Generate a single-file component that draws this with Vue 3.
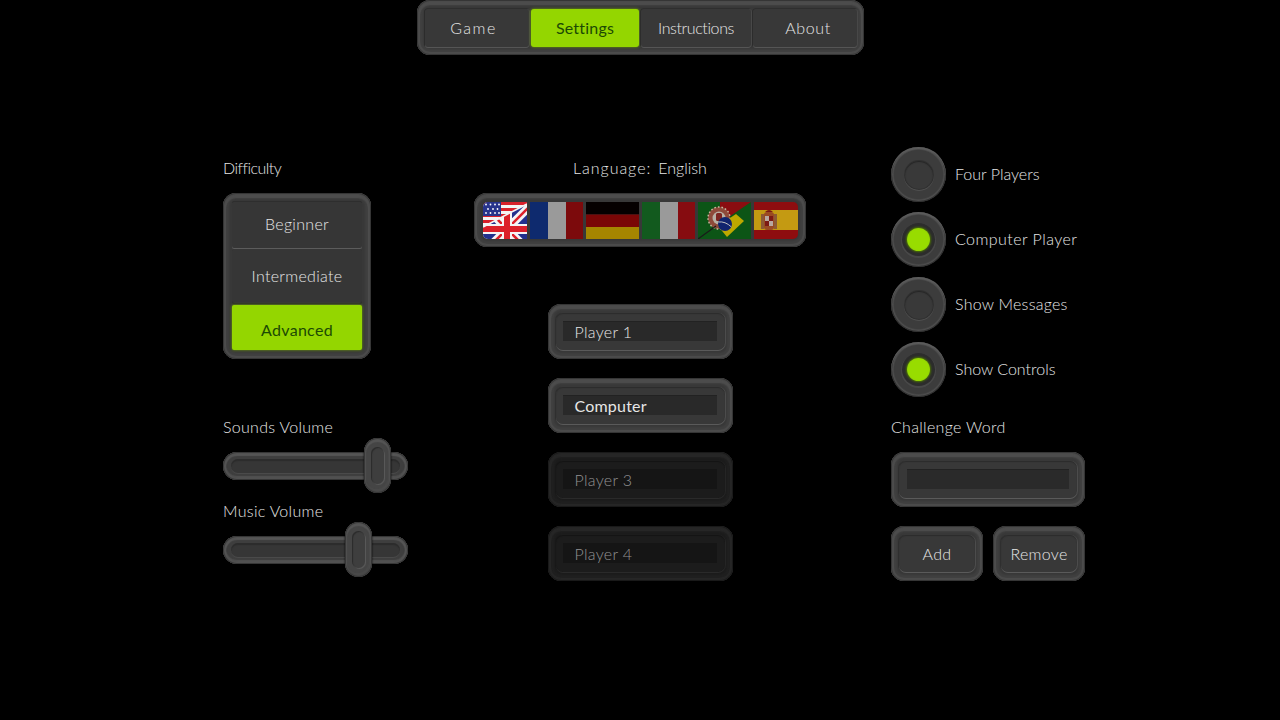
<script setup>
const tabs = [
  { name: 'Game', w: 104, ls: 1.5, cls: 'game' },
  { name: 'Settings', w: 108, ls: 0.2, on: true },
  { name: 'Instructions', w: 110, ls: -0.4 },
  { name: 'About', w: 104, ls: 0.6, cls: 'about' },
]
const levels = [
  { name: 'Beginner', h: 46, cls: 'a' },
  { name: 'Intermediate', h: 54, cls: 'b' },
  { name: 'Advanced', h: 45, cls: 'c', on: true },
]
const players = [
  { name: 'Player 1' },
  { name: 'Computer', big: true },
  { name: 'Player 3', off: true },
  { name: 'Player 4', off: true },
]
const toggles = [
  { name: 'Four Players', ls: 0 },
  { name: 'Computer Player', on: true, ls: 0.45 },
  { name: 'Show Messages', ls: 0.25 },
  { name: 'Show Controls', on: true, ls: 0 },
]
const sliders = [
  { name: 'Sounds Volume', left: 141, cls: 'first' },
  { name: 'Music Volume', left: 122, cls: 'second' },
]
</script>

<template>
  <div class="page">
    <nav class="nav frame">
      <div class="tabs">
        <div
          v-for="t in tabs"
          :key="t.name"
          class="tab"
          :class="[t.cls, { on: t.on }]"
          :style="{ width: t.w + 'px', letterSpacing: t.ls + 'px' }"
        >{{ t.name }}</div>
      </div>
    </nav>

    <main class="main">
      <section class="col left">
        <div class="label difficulty">Difficulty</div>
        <div class="levels frame">
          <div
            v-for="l in levels"
            :key="l.name"
            class="level"
            :class="[l.cls, { on: l.on }]"
            :style="{ height: l.h + 'px' }"
          >{{ l.name }}</div>
        </div>
        <div v-for="s in sliders" :key="s.name" class="slider-block" :class="s.cls">
          <div class="label">{{ s.name }}</div>
          <div class="slider">
            <div class="track"><div class="groove"></div></div>
            <div class="thumb" :style="{ left: s.left + 'px' }"><div class="thumb-in"></div></div>
          </div>
        </div>
      </section>

      <section class="col center">
        <div class="label lang"><span class="lang-key">Language:</span><span class="lang-val">English</span></div>
        <div class="flags frame">
          <div class="strip">
            <svg class="flag" width="44" height="37" viewBox="0 0 44 37">
              <defs>
                <clipPath id="uk"><path d="M0 25 L44 2 V37 H0 Z" /></clipPath>
              </defs>
              <rect width="44" height="37" fill="#f4f4f4" />
              <g fill="#d8202a">
                <rect y="0" width="44" height="3" />
                <rect y="6" width="44" height="3" />
                <rect y="12" width="44" height="3" />
                <rect y="18" width="44" height="3" />
              </g>
              <rect width="18" height="14" fill="#27348b" />
              <g fill="#fff">
                <circle cx="3" cy="2.5" r=".9" /><circle cx="7.5" cy="2.5" r=".9" /><circle cx="12" cy="2.5" r=".9" /><circle cx="16" cy="2.5" r=".9" />
                <circle cx="5" cy="7" r=".9" /><circle cx="10" cy="7" r=".9" /><circle cx="14.5" cy="7" r=".9" />
                <circle cx="3" cy="11" r=".9" /><circle cx="7.5" cy="11" r=".9" /><circle cx="12" cy="11" r=".9" /><circle cx="16" cy="11" r=".9" />
              </g>
              <g clip-path="url(#uk)">
                <rect width="44" height="37" fill="#22308c" />
                <path d="M0 3 L48 51 M0 51 L48 3" stroke="#f4f4f4" stroke-width="8" />
                <path d="M0 3 L48 51 M0 51 L48 3" stroke="#dc2029" stroke-width="2.6" />
                <rect y="22" width="44" height="10" fill="#f4f4f4" />
                <rect x="19" width="10" height="37" fill="#f4f4f4" />
                <rect y="24" width="44" height="6" fill="#dc2029" />
                <rect x="21" width="6" height="37" fill="#dc2029" />
              </g>
              <path d="M0 25 L44 2" stroke="#f4f4f4" stroke-width="1.6" />
            </svg>
            <svg class="flag" width="53" height="37" viewBox="0 0 53 37">
              <rect width="18" height="37" fill="#0e2a6e" />
              <rect x="18" width="18" height="37" fill="#9a9a9a" />
              <rect x="36" width="17" height="37" fill="#7c0a0c" />
            </svg>
            <svg class="flag" width="53" height="37" viewBox="0 0 53 37">
              <rect width="53" height="12.5" fill="#050000" />
              <rect y="12.5" width="53" height="12.5" fill="#7a0606" />
              <rect y="25" width="53" height="12" fill="#a58500" />
            </svg>
            <svg class="flag" width="53" height="37" viewBox="0 0 53 37">
              <rect width="18" height="37" fill="#125a1e" />
              <rect x="18" width="18" height="37" fill="#9a9a9a" />
              <rect x="36" width="17" height="37" fill="#860c10" />
            </svg>
            <svg class="flag" width="53" height="37" viewBox="0 0 53 37">
              <rect width="53" height="37" fill="#0c5516" />
              <path d="M22 0 H53 L22 21 Z" fill="#8a0d10" />
              <circle cx="21" cy="16" r="11" fill="#8e4a3a" />
              <circle cx="21" cy="16" r="11" fill="none" stroke="#c8b8a0" stroke-width="1.4" stroke-dasharray="1.6 2" />
              <circle cx="21" cy="16" r="6.5" fill="#b8b0a4" />
              <rect x="18" y="11" width="6" height="8" rx="1.5" fill="#7c2420" />
              <path d="M38 12 L46 19 L29 35 L20 24 Z" fill="#bda800" />
              <circle cx="27" cy="22" r="7" fill="#10246e" />
              <path d="M20.5 20 Q27 19 33.5 25" stroke="#c0c0c0" stroke-width="1" fill="none" />
              <path d="M0 37 L18 24" stroke="#1a1a1a" stroke-width="1.2" />
            </svg>
            <svg class="flag" width="46" height="37" viewBox="0 0 46 37">
              <rect width="46" height="37" fill="#8e0d0f" />
              <rect y="8" width="46" height="20" fill="#c49a12" />
              <rect x="7" y="12" width="3" height="15" fill="#8c5a34" />
              <rect x="20" y="12" width="3" height="15" fill="#8c5a34" />
              <rect x="10" y="10" width="10" height="18" rx="3" fill="#9a4a22" />
              <rect x="11" y="14" width="4" height="5" fill="#b8a8a0" />
              <rect x="15" y="14" width="4" height="5" fill="#7c1a14" />
              <rect x="11" y="19" width="4" height="5" fill="#7c1a14" />
              <rect x="15" y="19" width="4" height="5" fill="#b8a8a0" />
              <path d="M11 10 Q15 6 19 10 Z" fill="#7c1a14" />
            </svg>
          </div>
        </div>
        <div class="players">
          <div v-for="p in players" :key="p.name" class="frame player" :class="{ off: p.off }">
            <div class="ring">
              <div class="field" :class="{ big: p.big }">{{ p.name }}</div>
            </div>
          </div>
        </div>
      </section>

      <section class="col right">
        <div class="toggles">
          <div v-for="t in toggles" :key="t.name" class="toggle">
            <div class="knob" :class="{ on: t.on }"><div class="hole"></div></div>
            <span :style="{ letterSpacing: t.ls + 'px' }">{{ t.name }}</span>
          </div>
        </div>
        <div class="label word-label">Challenge Word</div>
        <div class="frame word">
          <div class="ring"><div class="field"></div></div>
        </div>
        <div class="buttons">
          <div class="frame btn"><div class="ring">Add</div></div>
          <div class="frame btn"><div class="ring">Remove</div></div>
        </div>
      </section>
    </main>
  </div>
</template>

<style>
html, body { background: #000; }
</style>

<style scoped>
.page {
  width: 1280px;
  height: 720px;
  overflow: hidden;
  background: #000;
  color: #e6e6e6;
  font-family: Lato, "Liberation Sans", sans-serif;
  font-size: 16px;
  font-weight: 300;
  letter-spacing: 0.3px;
  display: flex;
  flex-direction: column;
  align-items: flex-start;
}
.frame {
  box-sizing: border-box;
  background: #383838;
  border-radius: 13px;
  box-shadow:
    inset 0 0 1px 1px #333,
    inset 0 0 1px 3px #4d4d4d,
    inset 0 2px 1px 3px #4d4d4d,
    inset 0 0 2px 6px #404040;
}
.nav {
  width: 447px;
  height: 55px;
  padding: 9px 8px 8px;
  margin-left: 417px;
  flex: none;
}
.tabs {
  display: flex;
  justify-content: space-between;
  height: 38px;
  width: 432px;
}
.tab {
  display: flex;
  align-items: center;
  justify-content: center;
  padding-bottom: 2px;
  box-sizing: border-box;
  background: #383838;
  box-shadow: 0 1px 0 #555, 1px 0 0 #484848, -1px 0 0 #2c2c2c, 0 -1px 0 #2e2e2e;
  border-radius: 3px;
}
.tab.game { padding-right: 7px; }
.tab.about { padding-left: 6px; }
.tab.on, .level.on {
  background: #94d600;
  color: #1c4a04;
  font-weight: 400;
  box-shadow: 0 0 3px #6fa200;
}
.main {
  display: flex;
  margin-left: 223px;
  margin-top: 92px;
}
.col { display: flex; flex-direction: column; flex: none; }
.left { width: 185px; margin-right: 66px; padding-top: 11px; }
.center { width: 332px; margin-right: 85px; padding-top: 11px; }
.right { width: 194px; }
.label { line-height: 20px; height: 20px; white-space: nowrap; }
.difficulty { letter-spacing: -0.5px; }
.levels {
  width: 148px;
  height: 166px;
  margin-top: 15px;
  padding: 9px;
}
.level {
  display: flex;
  align-items: center;
  justify-content: center;
  box-sizing: border-box;
  background: #363636;
  margin-bottom: 1px;
  border-radius: 2px;
}
.level.a { box-shadow: 0 1px 0 #5c5c5c, 0 -1px 0 #2e2e2e; padding-bottom: 4px; }
.level.b { margin-bottom: 2px; padding-bottom: 2px; box-shadow: 0 1px 0 #2b2b2b; }
.level.c { padding-top: 3px; }
.slider-block.first { margin-top: 58px; }
.slider-block.second { margin-top: 21px; }
.slider {
  position: relative;
  height: 28px;
  margin-top: 15px;
}
.track {
  box-sizing: border-box;
  height: 28px;
  padding: 7px 8px;
  border-radius: 14px;
  background: #3e3e3e;
  box-shadow:
    inset 0 0 1px 1px #333,
    inset 0 1px 1px 3px #555,
    inset 0 -1px 1px 3px #505050;
}
.groove {
  height: 14px;
  border-radius: 7px;
  background: #363636;
  box-shadow: inset 0 2px 1px #2c2c2c, 0 1px 0 #4a4a4a;
}
.thumb {
  position: absolute;
  top: -14px;
  width: 27px;
  height: 55px;
  box-sizing: border-box;
  padding: 9px 7px;
  border-radius: 13.5px;
  background: #454545;
  box-shadow:
    0 0 2px #000,
    inset 0 0 1px 1px #333,
    inset 0 2px 1px 2px #555,
    inset -1px -2px 1px 2px #4a4a4a;
}
.thumb-in {
  height: 100%;
  border-radius: 6.5px;
  background: #3e3e3e;
  box-shadow: inset 1px 1px 1px #2b2b2b, 1px 1px 0 #585858;
}
.lang {
  display: flex;
  justify-content: center;
  gap: 7px;
}
.lang-key { letter-spacing: 0.95px; }
.lang-val { letter-spacing: 0; }
.flags {
  width: 332px;
  height: 54px;
  margin-top: 15px;
  padding: 9px;
}
.strip {
  display: flex;
  gap: 3px;
  width: 315px;
  height: 37px;
  overflow: hidden;
  border-radius: 5px;
}
.flag { flex: none; display: block; }
.players {
  width: 185px;
  margin: 57px auto 0;
  display: flex;
  flex-direction: column;
  gap: 19px;
}
.player { height: 55px; padding: 9px 8px; }
.ring {
  box-sizing: border-box;
  height: 100%;
  border-radius: 7px;
  padding: 8px 8px 9px 7px;
  box-shadow: inset 0 1px 1px #2c2c2c, 0 1px 0 #5a5a5a, 1px 0 0 #4c4c4c, -1px 0 0 #2f2f2f;
}
.field {
  box-sizing: border-box;
  height: 100%;
  min-height: 20px;
  padding-left: 12px;
  background: #292929;
  display: flex;
  align-items: center;
  box-shadow: inset 0 1px 0 #222;
}
.field.big { font-size: 16px; font-weight: 400; letter-spacing: 0.2px; }
.player.off { background: #1c1c1c; color: #929292;
  box-shadow:
    inset 0 0 1px 1px #191919,
    inset 0 0 1px 3px #272727,
    inset 0 2px 1px 3px #272727,
    inset 0 0 2px 6px #202020;
}
.player.off .ring { box-shadow: inset 0 1px 1px #151515, 0 1px 0 #2a2a2a, 1px 0 0 #252525, -1px 0 0 #181818; }
.player.off .field { background: #151515; box-shadow: none; }
.toggles { display: flex; flex-direction: column; gap: 10px; }
.toggle {
  display: flex;
  align-items: center;
  gap: 9px;
  height: 55px;
}
.toggle span { padding-bottom: 2px; }
.knob {
  box-sizing: border-box;
  width: 55px;
  height: 55px;
  border-radius: 50%;
  display: flex;
  align-items: center;
  justify-content: center;
  background: radial-gradient(circle at 50% 50%, #3c3c3c 0 62%, #4e4e4e 66%, #3e3e3e 71%, #434343 84%, #555 93%, #3a3a3a 100%);
  box-shadow: inset 0 2px 1px #5c5c5c, inset 0 0 0 1px #303030;
}
.hole {
  width: 28px;
  height: 28px;
  border-radius: 50%;
  background: #393939;
  box-shadow: inset 0 1px 1px #252525, 0 0 0 1px #303030, 0 1px 0 1px #505050;
}
.knob.on .hole {
  width: 23px;
  height: 23px;
  background: radial-gradient(circle, #98dc00 0 60%, #86c800 100%);
  box-shadow: 0 0 2px 1px #4c7500, 0 0 0 5px #2c2c2c, 0 1px 0 6px #484848;
}
.word-label { margin-top: 20px; }
.word { height: 55px; margin-top: 15px; padding: 9px 8px; }
.word .ring { padding-left: 8px; }
.word .field { padding: 0; background: #2a2a2a; }
.buttons { display: flex; gap: 10px; margin-top: 19px; }
.btn { width: 92px; height: 55px; padding: 9px 8px; }
.btn .ring {
  display: flex;
  align-items: center;
  justify-content: center;
  padding: 0;
}
</style>
